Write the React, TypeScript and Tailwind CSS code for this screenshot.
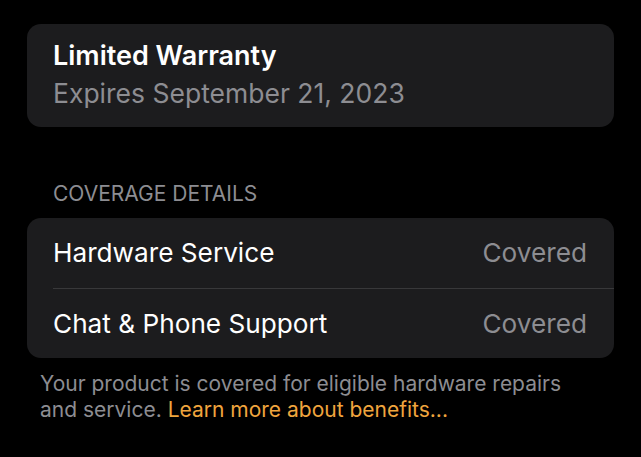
export default function App() {
  const rows = [
    { label: "Hardware Service", value: "Covered" },
    { label: "Chat & Phone Support", value: "Covered" },
  ];

  return (
    <div
      className="w-[641px] h-[457px] bg-black overflow-hidden px-[27px] pt-[24px]"
      style={{ fontFamily: "Inter, 'Liberation Sans', sans-serif" }}
    >
      {/* Warranty card */}
      <div className="bg-[#1c1c1e] rounded-[14px] h-[103px] pl-[26px] pt-[15px]">
        <p className="text-white font-semibold text-[27px] leading-[34px]">
          Limited Warranty
        </p>
        <p className="mt-[2px] text-[#8d8d92] text-[26.5px] leading-[36px]">
          Expires September 21, 2023
        </p>
      </div>

      {/* Section header */}
      <p className="mt-[53px] pl-[26px] text-[#8d8d92] text-[21px] leading-[28px] uppercase">
        Coverage Details
      </p>

      {/* Coverage card */}
      <div className="mt-[10px] bg-[#1c1c1e] rounded-[14px] pl-[26px]">
        {rows.map((row, i) => (
          <div
            key={row.label}
            className={
              "flex items-center justify-between h-[70px] pr-[27px] " +
              (i > 0 ? "border-t border-[#38383a]" : "")
            }
          >
            <span className="text-white text-[26.2px]">{row.label}</span>
            <span className="text-[#8d8d92] text-[26.2px]">{row.value}</span>
          </div>
        ))}
      </div>

      {/* Footer */}
      <p className="mt-[13px] ml-[13px] text-[#8d8d92] text-[21px] leading-[26px]">
        Your product is covered for eligible hardware repairs
        <br />
        and service. <span className="text-[#f0a53e]">Learn more about benefits...</span>
      </p>
    </div>
  );
}
